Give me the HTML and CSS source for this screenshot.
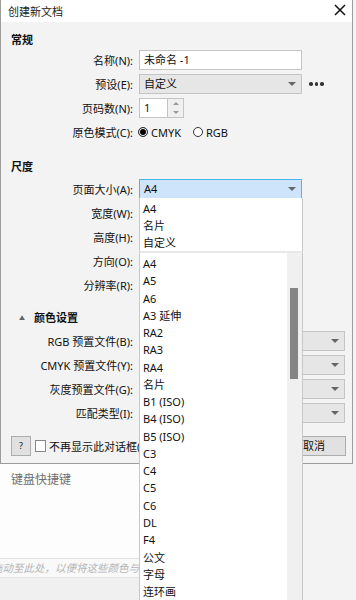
FILE: index.html
```html
<!DOCTYPE html>
<html lang="zh-CN">
  <head>
    <meta charset="UTF-8" />
    <meta name="viewport" content="width=device-width, initial-scale=1.0" />
    <title>创建新文档</title>
    <link rel="stylesheet" href="styles.css">
  </head>

  <body>
    <div class="dialog">
      <div class="titlebar">
        <span class="title">创建新文档</span>
        <span class="close">
          <svg width="12" height="12" viewBox="0 0 12 12">
            <path d="M1 1 L11 11 M11 1 L1 11" stroke="#111" stroke-width="1.5" fill="none" />
          </svg>
        </span>
      </div>

      <div class="dialog-body">
        <div class="section-title">常规</div>

        <div class="row">
          <span class="label">名称(N):</span>
          <div class="control text-box">未命名 -1</div>
        </div>

        <div class="row">
          <span class="label">预设(E):</span>
          <div class="control select-box">自定义<span class="arrow"></span></div>
          <span class="more"><i></i><i></i><i></i></span>
        </div>

        <div class="row">
          <span class="label">页码数(N):</span>
          <div class="spinner">
            <span class="spin-value">1</span>
            <span class="spin-buttons">
              <span class="spin-up"></span>
              <span class="spin-down"></span>
            </span>
          </div>
        </div>

        <div class="row">
          <span class="label">原色模式(C):</span>
          <div class="radios">
            <span class="radio checked"></span><span class="radio-text">CMYK</span>
            <span class="radio"></span><span class="radio-text">RGB</span>
          </div>
        </div>

        <div class="section-title second">尺度</div>

        <div class="row">
          <span class="label">页面大小(A):</span>
          <div class="control select-box active">A4<span class="arrow"></span></div>
        </div>
        <div class="row">
          <span class="label">宽度(W):</span>
          <div class="control text-box"></div>
        </div>
        <div class="row">
          <span class="label">高度(H):</span>
          <div class="control text-box"></div>
        </div>
        <div class="row">
          <span class="label">方向(O):</span>
          <div class="control text-box"></div>
        </div>
        <div class="row">
          <span class="label">分辨率(R):</span>
          <div class="control text-box"></div>
        </div>

        <div class="section-title colors"><span class="caret">▲</span>颜色设置</div>

        <div class="row">
          <span class="label">RGB 预置文件(B):</span>
          <div class="control wide select-box"><span class="arrow"></span></div>
        </div>
        <div class="row">
          <span class="label">CMYK 预置文件(Y):</span>
          <div class="control wide select-box"><span class="arrow"></span></div>
        </div>
        <div class="row">
          <span class="label">灰度预置文件(G):</span>
          <div class="control wide select-box"><span class="arrow"></span></div>
        </div>
        <div class="row">
          <span class="label">匹配类型(I):</span>
          <div class="control wide select-box"><span class="arrow"></span></div>
        </div>

        <div class="button-bar">
          <span class="btn help">?</span>
          <span class="checkbox"></span>
          <span class="check-text">不再显示此对话框(A)</span>
          <span class="spacer"></span>
          <span class="btn cancel">取消</span>
        </div>
      </div>
    </div>

    <div class="below">
      <div class="below-left">
        <div class="shortcuts">键盘快捷键</div>
        <div class="drop-strip"><span>拖动至此处，以便将这些颜色与文档一起保存</span></div>
        <div class="below-gray"></div>
      </div>
      <div class="below-right"></div>
    </div>

    <!-- page size dropdown, open over the dialog -->
    <div class="dropdown">
      <div class="recent">
        <div class="item">A4</div>
        <div class="item">名片</div>
        <div class="item">自定义</div>
      </div>
      <div class="all">
        <div class="items">
          <div class="item">A4</div>
          <div class="item">A5</div>
          <div class="item">A6</div>
          <div class="item">A3 延伸</div>
          <div class="item">RA2</div>
          <div class="item">RA3</div>
          <div class="item">RA4</div>
          <div class="item">名片</div>
          <div class="item">B1 (ISO)</div>
          <div class="item">B4 (ISO)</div>
          <div class="item">B5 (ISO)</div>
          <div class="item">C3</div>
          <div class="item">C4</div>
          <div class="item">C5</div>
          <div class="item">C6</div>
          <div class="item">DL</div>
          <div class="item">F4</div>
          <div class="item">公文</div>
          <div class="item">字母</div>
          <div class="item">连环画</div>
        </div>
        <div class="scroll-track">
          <div class="scroll-thumb"></div>
        </div>
      </div>
    </div>
  </body>
</html>
```

FILE: styles.css
```css
body {
  margin: 0;
  padding: 0;
  width: 356px;
  height: 600px;
  overflow: hidden;
  position: relative;
  background-color: #f3f3f3;
  font-family: "Noto Sans", "Noto Sans CJK SC", sans-serif;
  font-size: 11px;
  color: #111;
}

.dialog {
  width: 351px;
  border-left: 1px solid #9c9c9c;
  border-right: 1px solid #9c9c9c;
  border-bottom: 1px solid #9c9c9c;
  background-color: #f3f3f3;
}

.titlebar {
  height: 22px;
  background-color: #fff;
  display: flex;
  align-items: center;
  justify-content: space-between;
  padding: 0 6px 0 7px;
}

.title {
  font-size: 11px;
  color: #222;
}

.close {
  display: flex;
  margin-top: -2px;
}

.dialog-body {
  padding: 10px 0 7px 0;
}

.section-title {
  height: 16px;
  line-height: 16px;
  padding-left: 10px;
  font-weight: bold;
}

.section-title.second {
  margin-top: 15px;
  margin-bottom: 2px;
}

.section-title.colors {
  margin-top: 13px;
  margin-bottom: 3px;
  padding-left: 18px;
}

.caret {
  display: inline-block;
  font-size: 6px;
  color: #666;
  width: 15px;
  vertical-align: 2px;
}

.row {
  display: flex;
  align-items: center;
  height: 24px;
}

.label {
  width: 132px;
  flex: none;
  text-align: right;
  white-space: nowrap;
}

.control {
  margin-left: 6px;
  width: 163px;
  height: 20px;
  box-sizing: border-box;
  border: 1px solid #c4c4c4;
  line-height: 18px;
  padding-left: 4px;
  position: relative;
}

.control.wide {
  width: 206px;
}

.text-box {
  background-color: #fff;
}

.select-box {
  background-color: #e6e6e6;
}

.select-box.active {
  background-color: #cde4fb;
  border-color: #45b6f2;
}

.arrow {
  position: absolute;
  right: 5px;
  top: 7px;
  width: 0;
  height: 0;
  border-left: 4px solid transparent;
  border-right: 4px solid transparent;
  border-top: 4px solid #666;
}

.more {
  margin-left: 7px;
  display: flex;
  gap: 2px;
}

.more i {
  width: 3.5px;
  height: 3.5px;
  border-radius: 50%;
  background-color: #333;
}

.spinner {
  margin-left: 6px;
  width: 45px;
  height: 20px;
  box-sizing: border-box;
  border: 1px solid #c4c4c4;
  background-color: #fff;
  display: flex;
}

.spin-value {
  flex: 1;
  line-height: 18px;
  padding-left: 4px;
}

.spin-buttons {
  width: 15px;
  border-left: 1px solid #c4c4c4;
  background-color: #f0f0f0;
  display: flex;
  flex-direction: column;
  align-items: center;
  justify-content: space-around;
}

.spin-up,
.spin-down {
  width: 0;
  height: 0;
  border-left: 3px solid transparent;
  border-right: 3px solid transparent;
}

.spin-up {
  border-bottom: 3px solid #9a9a9a;
}

.spin-down {
  border-top: 3px solid #9a9a9a;
}

.radios {
  margin-left: 2px;
  display: flex;
  align-items: center;
}

.radio {
  width: 10px;
  height: 10px;
  box-sizing: border-box;
  border: 1px solid #333;
  border-radius: 50%;
  background-color: #fff;
  margin-left: 3px;
}

.radio.checked {
  background-color: #000;
  box-shadow: inset 0 0 0 1px #fff;
}

.radio-text {
  margin-left: 3px;
  margin-right: 9px;
}

.button-bar {
  display: flex;
  align-items: center;
  margin-top: 11px;
  height: 20px;
  padding: 0 6px 0 10px;
}

.btn {
  height: 20px;
  box-sizing: border-box;
  border: 1px solid #adadad;
  background-color: #e1e1e1;
  line-height: 18px;
  text-align: center;
}

.help {
  width: 20px;
  font-size: 9px;
}

.checkbox {
  width: 11px;
  height: 12px;
  box-sizing: border-box;
  border: 1px solid #888;
  background-color: #fff;
  margin-left: 4px;
}

/* the open list covers the rest of this label */
.check-text {
  margin-left: 3px;
  white-space: nowrap;
  max-width: 91px;
  overflow: hidden;
}

.spacer {
  flex: 1;
}

.cancel {
  width: 64px;
}

.below {
  display: flex;
  height: 140px;
}

.below-left {
  width: 139px;
  display: flex;
  flex-direction: column;
}

.shortcuts {
  background-color: #fdfdfd;
  height: 94px;
  padding: 6px 0 0 11px;
  box-sizing: border-box;
  font-size: 12px;
  color: #6f6f6f;
  white-space: nowrap;
}

.drop-strip {
  height: 20px;
  box-sizing: border-box;
  border-top: 1px solid #e4e4e4;
  border-bottom: 1px solid #e4e4e4;
  background-color: #f9f9f9;
  overflow: hidden;
  white-space: nowrap;
  line-height: 18px;
}

.drop-strip span {
  display: inline-block;
  margin-left: -8px;
  font-size: 10.5px;
  font-style: italic;
  color: #b4b4b4;
}

.below-gray {
  flex: 1;
  background-color: #f0f0f0;
}

.below-right {
  flex: 1;
  background-color: #f3f3f3;
}

.dropdown {
  position: absolute;
  left: 139px;
  top: 198px;
  width: 164px;
}

.recent {
  background-color: #fff;
  border-left: 1px solid #c8c8c8;
  border-right: 1px solid #c8c8c8;
  padding-top: 2px;
  border-bottom: 2px solid #e8e8e8;
}

.item {
  height: 17px;
  line-height: 17px;
  padding-left: 3px;
  white-space: nowrap;
}

.all {
  display: flex;
  height: 360px;
  background-color: #fff;
  border-left: 1px solid #c8c8c8;
  border-right: 1px solid #c8c8c8;
}

.all .items {
  flex: 1;
  padding-top: 2px;
}

.all .item {
  height: 17.28px;
  line-height: 17.28px;
}

.scroll-track {
  width: 15px;
  background-color: #f0f0f0;
}

.scroll-thumb {
  margin: 35px 0 0 3px;
  width: 8px;
  height: 91px;
  background-color: #858585;
}
```
